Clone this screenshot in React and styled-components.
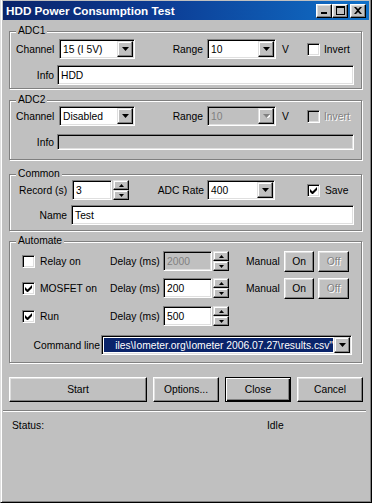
import React from 'react';
import styled, { createGlobalStyle } from 'styled-components';

const GlobalStyle = createGlobalStyle`
  html, body {
    margin: 0;
    padding: 0;
    background: #c0c0c0;
  }
  body {
    font-family: "Liberation Sans", Arial, sans-serif;
    font-size: 10.3px;
    color: #000;
  }
`;

const Window = styled.div`
  width: 372px;
  height: 503px;
  box-sizing: border-box;
  background: #c0c0c0;
  border-left: 1px solid #dfdfdf;
  border-right: 1px solid #000;
  border-bottom: 1px solid #000;
  box-shadow: inset 1px 0 0 #fff, inset -1px -1px 0 #808080;
  padding: 1px 2px 2px 2px;
  display: flex;
  flex-direction: column;
`;

const TitleBar = styled.div`
  height: 19px;
  flex: none;
  display: flex;
  align-items: center;
  padding: 0 3px 0 3px;
  background: linear-gradient(to right, #0a246a 0%, #0c3a92 40%, #1070c8 100%);
`;

const Title = styled.div`
  flex: 1;
  color: #fff;
  font-weight: bold;
  font-size: 11.7px;
  white-space: nowrap;
`;

const CapButton = styled.div`
  width: 16px;
  height: 14px;
  box-sizing: border-box;
  margin-left: ${p => p.$ml || 0}px;
  background: #c0c0c0;
  border: 1px solid;
  border-color: #fff #000 #000 #fff;
  box-shadow: inset -1px -1px 0 #808080, inset 1px 1px 0 #dfdfdf;
  display: flex;
  align-items: center;
  justify-content: center;
`;

const Body = styled.div`
  padding: 5px 0 0 6px;
  display: flex;
  flex-direction: column;
  flex: 1;
`;

const Group = styled.fieldset`
  width: 353px;
  box-sizing: border-box;
  margin: ${p => p.$mt || 0}px 0 0 0;
  padding: ${p => p.$pt || 0}px 0 ${p => p.$pb || 0}px 0;
  min-width: 0;
  border: 1px solid #808080;
  box-shadow: inset 1px 1px 0 #fff, 1px 1px 0 #fff;
  display: flex;
  flex-direction: column;
  gap: ${p => p.$gap || 6}px;
`;

const Legend = styled.legend`
  margin-left: 6px;
  padding: 0 2px;
  line-height: 12px;
  background: #c0c0c0;
`;

const Row = styled.div`
  display: flex;
  align-items: center;
  height: ${p => p.$h || 20}px;
  margin-top: ${p => p.$mt || 0}px;
`;

const Label = styled.span`
  flex: none;
  width: ${p => (p.$w ? `${p.$w}px` : 'auto')};
  margin-left: ${p => p.$ml || 0}px;
  text-align: ${p => (p.$right ? 'right' : 'left')};
  white-space: nowrap;
  color: ${p => (p.$disabled ? '#808080' : '#000')};
  text-shadow: ${p => (p.$disabled ? '1px 1px 0 #fff' : 'none')};
`;

const Field = styled.div`
  flex: none;
  width: ${p => p.$w}px;
  height: ${p => p.$h || 20}px;
  margin-left: ${p => p.$ml || 0}px;
  box-sizing: border-box;
  border: 1px solid;
  border-color: #808080 #fff #fff #808080;
  box-shadow: inset 1px 1px 0 #000, inset -1px -1px 0 #dfdfdf;
  background: ${p => (p.$disabled ? '#c0c0c0' : '#fff')};
  color: ${p => (p.$disabled ? '#808080' : '#000')};
  padding: 1px 1px 1px 2px;
  display: flex;
  align-items: center;
  overflow: hidden;
`;

const FieldText = styled.span`
  flex: 1;
  padding-left: 1px;
  white-space: nowrap;
  overflow: hidden;
`;

const Selected = styled.span`
  flex: 1;
  align-self: stretch;
  margin: 1px 1px 1px 0;
  padding-left: 1px;
  display: flex;
  align-items: center;
  justify-content: flex-end;
  white-space: nowrap;
  overflow: hidden;
  background: #0a246a;
  color: #fff;
`;

const DropButton = styled.div`
  width: 16px;
  align-self: stretch;
  flex: none;
  box-sizing: border-box;
  background: #c0c0c0;
  border: 1px solid;
  border-color: #dfdfdf #000 #000 #dfdfdf;
  box-shadow: inset -1px -1px 0 #808080, inset 1px 1px 0 #fff;
  display: flex;
  align-items: center;
  justify-content: center;
`;

const SpinBox = styled.div`
  flex: none;
  width: 16px;
  height: 20px;
  margin-left: ${p => p.$ml || 1}px;
  display: flex;
  flex-direction: column;
`;

const SpinButton = styled.div`
  flex: 1;
  box-sizing: border-box;
  background: #c0c0c0;
  border: 1px solid;
  border-color: #dfdfdf #000 #000 #dfdfdf;
  box-shadow: inset -1px -1px 0 #808080, inset 1px 1px 0 #fff;
  display: flex;
  align-items: center;
  justify-content: center;
`;

const Check = styled.div`
  flex: none;
  width: 13px;
  height: 13px;
  margin-left: ${p => p.$ml || 0}px;
  box-sizing: border-box;
  border: 1px solid;
  border-color: #808080 #fff #fff #808080;
  box-shadow: inset 1px 1px 0 #000, inset -1px -1px 0 #dfdfdf;
  background: ${p => (p.$disabled ? '#c0c0c0' : '#fff')};
  display: flex;
  align-items: center;
  justify-content: center;
`;

const Button = styled.div`
  flex: none;
  width: ${p => p.$w}px;
  height: ${p => p.$h || 25}px;
  margin-left: ${p => p.$ml || 0}px;
  box-sizing: border-box;
  background: #c0c0c0;
  border: 1px solid;
  border-color: ${p => (p.$default ? '#000' : '#fff #000 #000 #fff')};
  box-shadow: ${p =>
    p.$default
      ? 'inset 1px 1px 0 #fff, inset -1px -1px 0 #000, inset -2px -2px 0 #808080'
      : 'inset -1px -1px 0 #808080, inset 1px 1px 0 #dfdfdf'};
  display: flex;
  align-items: center;
  justify-content: center;
  color: ${p => (p.$disabled ? '#808080' : '#000')};
  text-shadow: ${p => (p.$disabled ? '1px 1px 0 #fff' : 'none')};
`;

const ButtonRow = styled.div`
  display: flex;
  margin-top: 14px;
  gap: 6px;
`;

const Separator = styled.div`
  width: 363px;
  height: 0;
  margin: 8px 0 0 -6px;
  border-top: 1px solid #808080;
  border-bottom: 1px solid #fff;
`;

const StatusRow = styled.div`
  display: flex;
  margin: 8px 0 0 3px;
`;

function Arrow({ dir = 'down', disabled }) {
  const pts = dir === 'down' ? '0,0 7,0 3.5,4' : '0,4 7,4 3.5,0';
  return (
    <svg width="7" height="4" viewBox="0 0 7 4" style={{ display: 'block' }}>
      {disabled && <polygon points={pts} fill="#fff" transform="translate(1,1)" />}
      <polygon points={pts} fill={disabled ? '#808080' : '#000'} />
    </svg>
  );
}

function SmallArrow({ dir }) {
  const pts = dir === 'down' ? '0,0 5,0 2.5,3' : '0,3 5,3 2.5,0';
  return (
    <svg width="5" height="3" viewBox="0 0 5 3" style={{ display: 'block' }}>
      <polygon points={pts} fill="#000" />
    </svg>
  );
}

function Combo({ w, ml, value, disabled, selected }) {
  return (
    <Field $w={w} $ml={ml} $disabled={disabled}>
      {selected ? <Selected>{value}</Selected> : <FieldText>{value}</FieldText>}
      <DropButton>
        <Arrow disabled={disabled} />
      </DropButton>
    </Field>
  );
}

function Spinner({ w, ml, value, disabled }) {
  return (
    <>
      <Field $w={w} $ml={ml} $disabled={disabled}>
        <FieldText>{value}</FieldText>
      </Field>
      <SpinBox>
        <SpinButton><SmallArrow dir="up" /></SpinButton>
        <SpinButton><SmallArrow dir="down" /></SpinButton>
      </SpinBox>
    </>
  );
}

function CheckBox({ ml, checked, disabled }) {
  return (
    <Check $ml={ml} $disabled={disabled}>
      {checked && (
        <svg width="7" height="7" viewBox="0 0 7 7" style={{ display: 'block' }}>
          <path d="M0 2v3l2 2h1l4-4V0L2.5 4.5z" fill="#000" />
        </svg>
      )}
    </Check>
  );
}

function AutoRow({ label, checked, delay, disabled, manual, mt }) {
  return (
    <Row $mt={mt}>
      <CheckBox ml={12} checked={checked} />
      <Label $ml={5} $w={70}>{label}</Label>
      <Label $w={50}>Delay (ms)</Label>
      <Spinner w={49} ml={3} value={delay} disabled={disabled} />
      {manual && (
        <>
          <Label $ml={17} $w={36}>Manual</Label>
          <Button $w={30} $h={21} $ml={2}>On</Button>
          <Button $w={31} $h={21} $ml={4} $disabled>Off</Button>
        </>
      )}
    </Row>
  );
}

export default function App() {
  return (
    <>
      <GlobalStyle />
      <Window>
        <TitleBar>
          <Title>HDD Power Consumption Test</Title>
          <CapButton>
            <svg width="8" height="7" viewBox="0 0 8 7" style={{ display: 'block' }}>
              <rect x="1" y="5" width="6" height="2" fill="#000" />
            </svg>
          </CapButton>
          <CapButton>
            <svg width="9" height="9" viewBox="0 0 9 9" style={{ display: 'block' }}>
              <path d="M0 0h9v9H0z M1 2v6h7V2z" fill="#000" fillRule="evenodd" />
            </svg>
          </CapButton>
          <CapButton $ml={2}>
            <svg width="8" height="7" viewBox="0 0 8 7" style={{ display: 'block' }}>
              <path d="M0 0h2l2 2 2-2h2L5 3.5 8 7H6L4 5 2 7H0l3-3.5z" fill="#000" />
            </svg>
          </CapButton>
        </TitleBar>

        <Body>
          <Group $pt={2} $pb={3}>
            <Legend>ADC1</Legend>
            <Row>
              <Label $ml={6} $w={41}>Channel</Label>
              <Combo w={76} ml={2} value="15 (I 5V)" />
              <Label $ml={28} $w={40} $right>Range</Label>
              <Combo w={69} ml={4} value="10" />
              <Label $ml={6} $w={10}>V</Label>
              <CheckBox ml={15} />
              <Label $ml={4}>Invert</Label>
            </Row>
            <Row>
              <Label $w={44} $right>Info</Label>
              <Field $w={297} $ml={3}>
                <FieldText>HDD</FieldText>
              </Field>
            </Row>
          </Group>

          <Group $mt={5} $pt={0} $pb={9} $gap={8}>
            <Legend>ADC2</Legend>
            <Row>
              <Label $ml={6} $w={41}>Channel</Label>
              <Combo w={76} ml={2} value="Disabled" />
              <Label $ml={28} $w={40} $right>Range</Label>
              <Combo w={69} ml={4} value="10" disabled />
              <Label $ml={6} $w={10}>V</Label>
              <CheckBox ml={15} disabled />
              <Label $ml={4} $disabled>Invert</Label>
            </Row>
            <Row $h={16}>
              <Label $w={44} $right>Info</Label>
              <Field $w={297} $h={16} $ml={3} $disabled />
            </Row>
          </Group>

          <Group $mt={8} $pt={0} $pb={5} $gap={5}>
            <Legend>Common</Legend>
            <Row>
              <Label $ml={9} $w={53}>Record (s)</Label>
              <Spinner w={40} ml={0} value="3" />
              <Label $ml={15} $w={60} $right>ADC Rate</Label>
              <Combo w={68} ml={3} value="400" />
              <CheckBox ml={32} checked />
              <Label $ml={5}>Save</Label>
            </Row>
            <Row>
              <Label $w={57} $right>Name</Label>
              <Field $w={283} $ml={4}>
                <FieldText>Test</FieldText>
              </Field>
            </Row>
          </Group>

          <Group $mt={4} $pt={4} $pb={7} $gap={7}>
            <Legend>Automate</Legend>
            <AutoRow label="Relay on" delay="2000" disabled manual />
            <AutoRow label="MOSFET on" checked delay="200" manual />
            <AutoRow label="Run" checked delay="500" mt={1} />
            <Row $mt={2}>
              <Label $w={90} $right>Command line</Label>
              <Combo
                w={251}
                ml={1}
                selected
                value={'iles\\Iometer.org\\Iometer 2006.07.27\\results.csv"'}
              />
            </Row>
          </Group>

          <ButtonRow>
            <Button $w={138}>Start</Button>
            <Button $w={66}>Options...</Button>
            <Button $w={66} $default>Close</Button>
            <Button $w={66}>Cancel</Button>
          </ButtonRow>

          <Separator />

          <StatusRow>
            <Label $w={255}>Status:</Label>
            <Label>Idle</Label>
          </StatusRow>
        </Body>
      </Window>
    </>
  );
}
